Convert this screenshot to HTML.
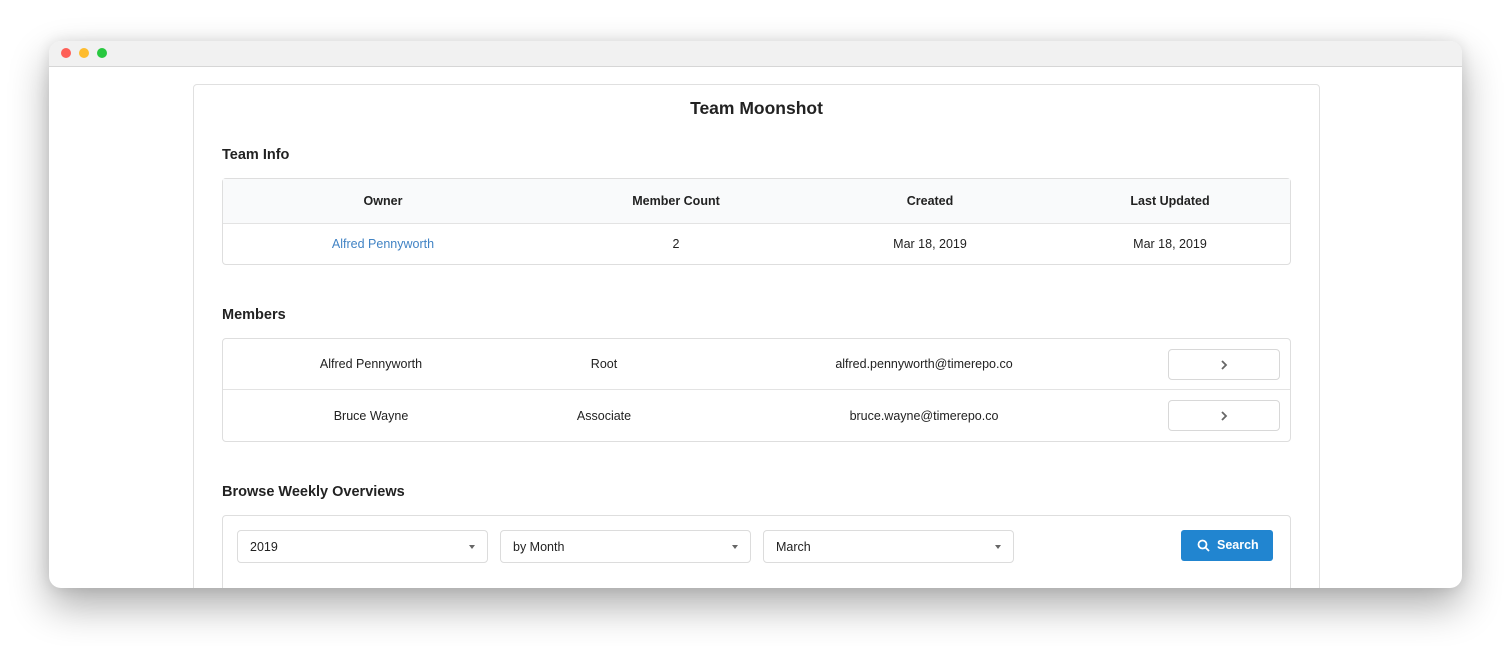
<!DOCTYPE html>
<html><head><meta charset="utf-8"><style>
*{box-sizing:border-box;margin:0;padding:0}
html,body{width:1511px;height:646px;background:#fff;overflow:hidden;font-family:"Liberation Sans",sans-serif;color:#222}
.win{position:absolute;left:49px;top:41px;width:1413px;height:547px;border-radius:12px;background:#fff;overflow:hidden;box-shadow:0 18px 40px rgba(0,0,0,.32),0 0 14px rgba(0,0,0,.1)}
.tb{height:26px;background:#f1f1f1;border-bottom:1px solid #d6d6d6;position:relative}
.dot{position:absolute;top:7px;width:10px;height:10px;border-radius:50%}
.card{position:absolute;left:144px;top:43px;width:1127px;height:510px;border:1px solid #e0e0e0;border-radius:4px;background:#fff}
.t{position:absolute;left:0;width:100%;text-align:center;font-weight:bold;font-size:17.5px;top:13px}
h3{position:absolute;left:28px;font-size:14.5px;font-weight:bold}
.panel{position:absolute;left:28px;width:1069px;border:1px solid #dedede;border-radius:4px;background:#fff;font-size:12.5px}
.row{position:relative;border-bottom:1px solid #e3e3e3}
.row:last-child{border-bottom:none}
.c{position:absolute;top:0;text-align:center;transform:translateX(-50%);white-space:nowrap}
.btn{position:absolute;left:945px;width:112px;height:31px;border:1px solid #d8d8d8;border-radius:4px;background:#fff}
.btn svg{position:absolute;left:51px;top:9px}
.sel{position:absolute;top:14px;width:251px;height:33px;border:1px solid #dcdcdc;border-radius:4px;font-size:12.5px;padding:9px 12px}
.sel:after{content:"";position:absolute;right:12px;top:14px;border-left:3.5px solid transparent;border-right:3.5px solid transparent;border-top:4px solid #666}
.sb{position:absolute;left:958px;top:14px;width:92px;height:31px;background:#2185d0;border-radius:3px;color:#fff;font-weight:bold;font-size:12.5px;padding:8px 0 0 36px}
.sb svg{position:absolute;left:16px;top:9px}
</style></head><body>
<div class="win">
 <div class="tb"><span class="dot" style="left:12px;background:#fe5f57"></span><span class="dot" style="left:30px;background:#febc2e"></span><span class="dot" style="left:48px;background:#28c840"></span></div>
 <div class="card">
  <div class="t">Team Moonshot</div>
  <h3 style="top:62px">Team Info</h3>
  <div class="panel" style="top:93px;height:87px">
   <div class="row" style="height:45px;background:#f9fafb;font-weight:bold"><div class="c" style="left:160px;top:15px">Owner</div><div class="c" style="left:453px;top:15px">Member Count</div><div class="c" style="left:707px;top:15px">Created</div><div class="c" style="left:947px;top:15px">Last Updated</div></div>
   <div class="row" style="height:41px"><div class="c" style="left:160px;top:13px;color:#4183c4">Alfred Pennyworth</div><div class="c" style="left:453px;top:13px">2</div><div class="c" style="left:707px;top:13px">Mar 18, 2019</div><div class="c" style="left:947px;top:13px">Mar 18, 2019</div></div>
  </div>
  <h3 style="top:222px">Members</h3>
  <div class="panel" style="top:253px;height:104px">
   <div class="row" style="height:51px"><div class="c" style="left:148px;top:18px">Alfred Pennyworth</div><div class="c" style="left:381px;top:18px">Root</div><div class="c" style="left:701px;top:18px">alfred.pennyworth@timerepo.co</div><div class="btn" style="top:10px"><svg width="8" height="12" viewBox="0 0 8 12"><path d="M2 2l4 4-4 4" stroke="#666" stroke-width="1.8" fill="none"/></svg></div></div>
   <div class="row" style="height:51px"><div class="c" style="left:148px;top:19px">Bruce Wayne</div><div class="c" style="left:381px;top:19px">Associate</div><div class="c" style="left:701px;top:19px">bruce.wayne@timerepo.co</div><div class="btn" style="top:10px"><svg width="8" height="12" viewBox="0 0 8 12"><path d="M2 2l4 4-4 4" stroke="#666" stroke-width="1.8" fill="none"/></svg></div></div>
  </div>
  <h3 style="top:399px">Browse Weekly Overviews</h3>
  <div class="panel" style="top:430px;height:78px">
   <div class="sel" style="left:14px">2019</div>
   <div class="sel" style="left:277px">by Month</div>
   <div class="sel" style="left:540px">March</div>
   <div class="sb"><svg width="13" height="13" viewBox="0 0 13 13"><circle cx="5.5" cy="5.5" r="4" stroke="#fff" stroke-width="1.8" fill="none"/><path d="M8.5 8.5l3.5 3.5" stroke="#fff" stroke-width="1.8"/></svg>Search</div>
  </div>
 </div>
</div>
</body></html>
